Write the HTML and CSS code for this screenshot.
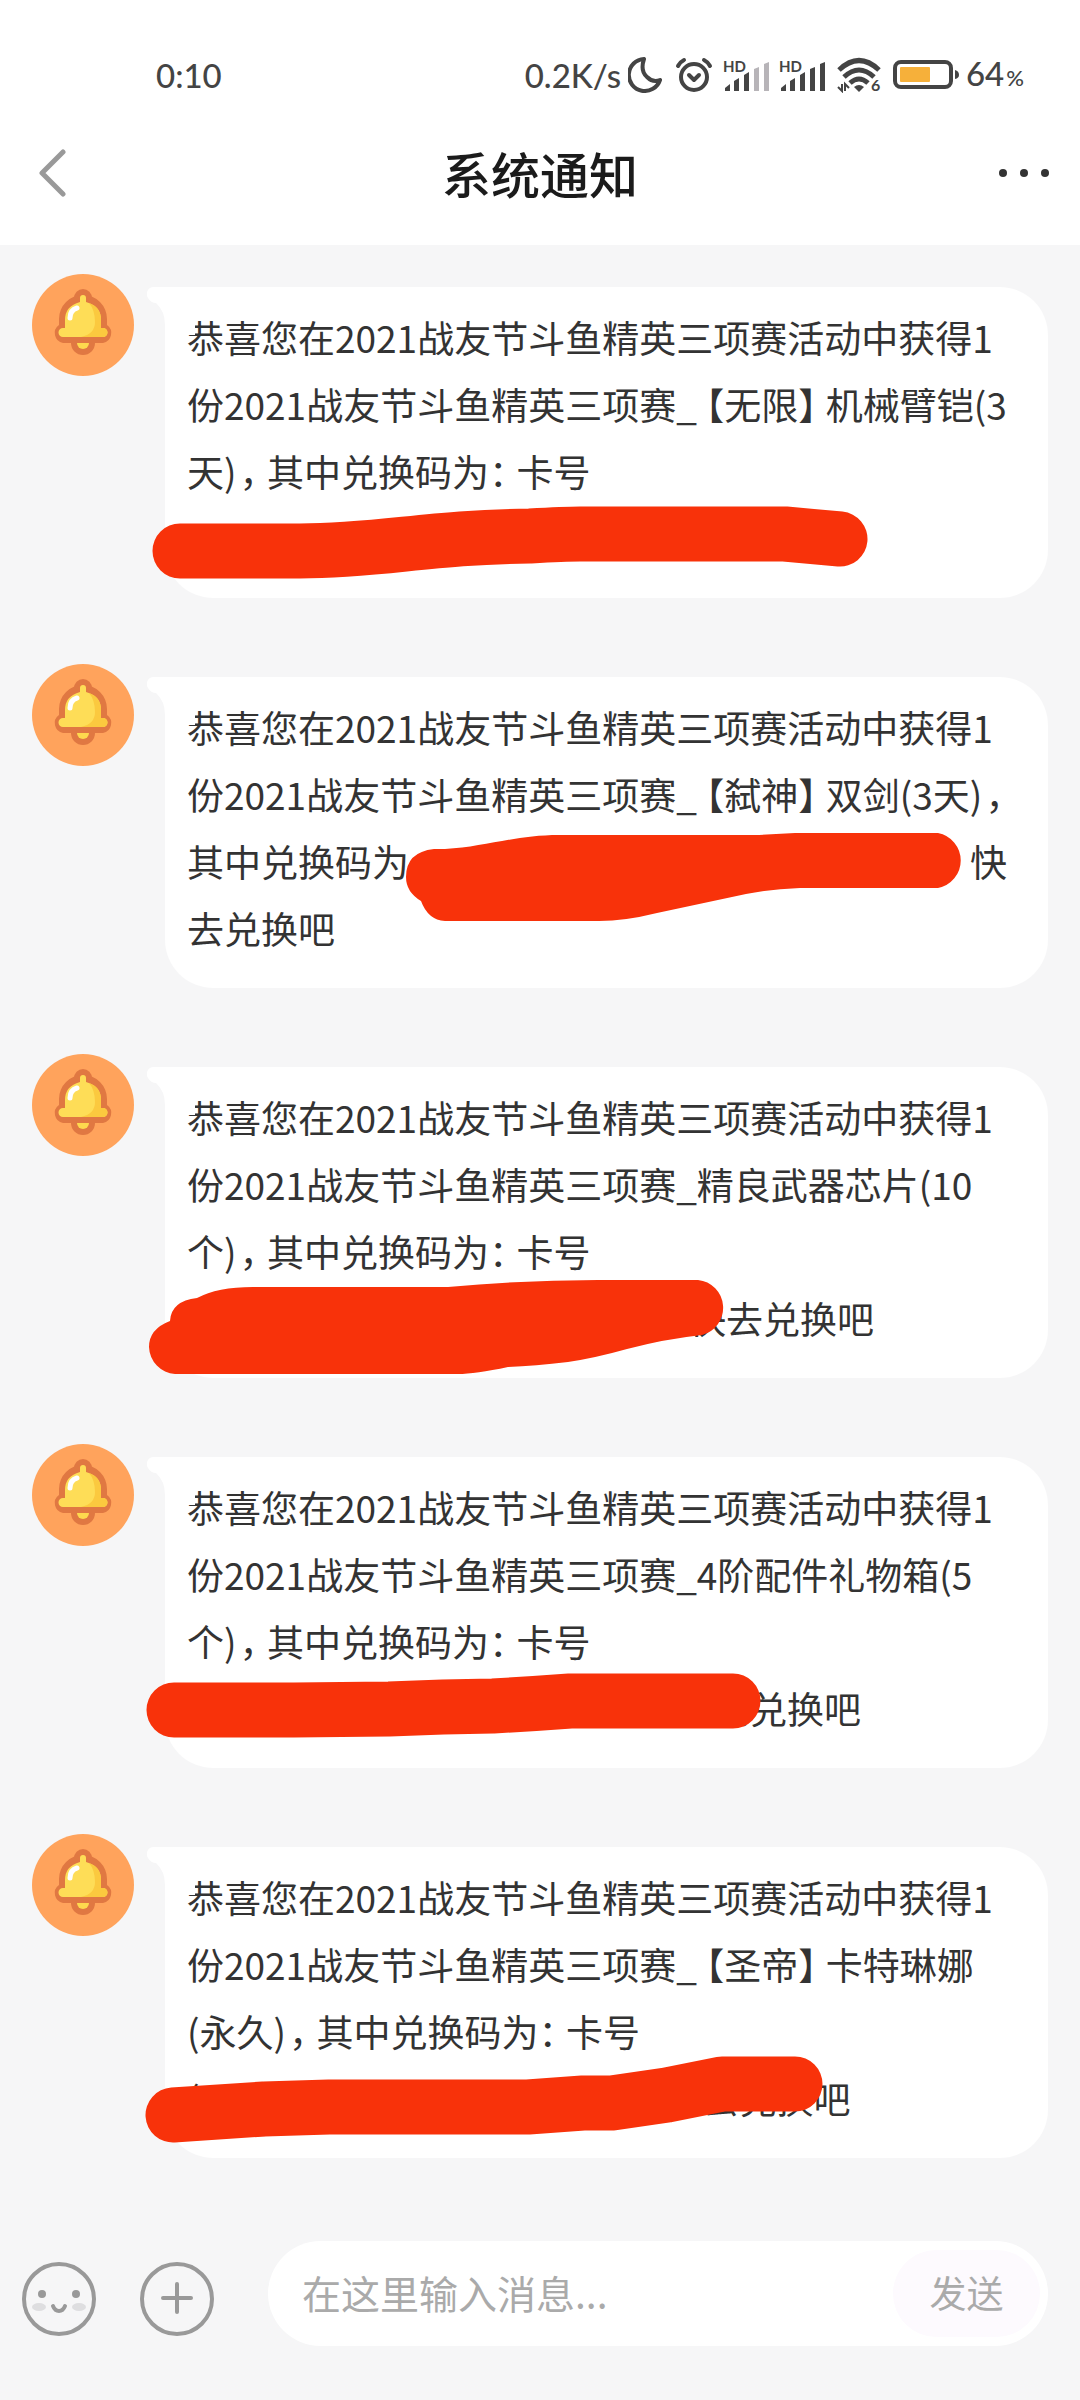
FILE: index.html
```html
<!DOCTYPE html>
<html lang="zh-CN">
<head>
<meta charset="utf-8">
<meta name="viewport" content="width=device-width, initial-scale=1">
<title>系统通知</title>
<link rel="stylesheet" href="styles.css">
</head>
<body>
<svg class="defs" width="0" height="0" aria-hidden="true">
  <symbol id="bell" viewBox="0 0 102 102">
    <circle cx="51" cy="51" r="51" fill="#ffa35c"/>
    <g fill="#e07842">
      <circle cx="51" cy="24" r="9"/>
      <path d="M27 51V45A24 24 0 0 1 75 45V51A10 10 0 0 1 71 69H31A10 10 0 0 1 27 51Z"/>
      <path d="M39 66H63V69A12 12 0 0 1 39 69Z"/>
    </g>
    <path d="M45 69H57A6 6 0 0 1 45 69Z" fill="#fed94e"/>
    <path d="M48 28V24A3 3 0 0 1 54 24V28Q69 32 69 46V54H71A4 4 0 0 1 71 63H31A4 4 0 0 1 31 54H33V46Q33 32 48 28Z" fill="#fedd57"/>
    <path d="M57 29Q69 33 69 46V54H71A4 4 0 0 1 71 63H49Q63 60 63 48Q63 36 57 29Z" fill="#fbc93f"/>
    <path d="M38 44Q38 36 45 34" fill="none" stroke="#fff" stroke-width="5" stroke-linecap="round"/>
  </symbol>
  <symbol id="bubble-tail" viewBox="0 0 48 48">
    <path d="M48 0H7A7 7 0 0 0 1 11Q4 16 9 16Q18 24 18 38V48H48Z" fill="#fff"/>
  </symbol>
</svg>

<header class="top">
  <div class="status">
    <time class="clock">0:10</time>
    <div class="indicators">
      <span>0.2K/s</span>
      <svg class="moon" width="34" height="36" viewBox="0 0 34 36" fill="none" stroke="#444" stroke-width="4" stroke-linejoin="round"><path d="M16 2A16 16 0 1 0 32 23Q25 26 19 20Q12 14 16 2Z"/></svg>
      <svg class="alarm" width="38" height="36" viewBox="0 0 38 36" fill="none" stroke="#444" stroke-width="4" stroke-linecap="round" stroke-linejoin="round"><circle cx="19" cy="20" r="13"/><path d="M14 18L19 23L24 18M3 9Q5 5 9 3M35 9Q33 5 29 3"/></svg>
      <svg class="signal" width="46" height="34" viewBox="0 -2 46 34" fill="#444"><text class="hd" x="0" y="12">HD</text><path d="M2 31V28L7 24V31ZM11 31V21L16 18V31ZM21 31V15L26 12V31Z"/><path fill="#b7b4b8" d="M31 31V9L36 7V31ZM41 31V4L46 2V31Z"/></svg>
      <svg class="signal" width="46" height="34" viewBox="0 -2 46 34" fill="#444"><text class="hd" x="0" y="12">HD</text><path d="M2 31V28L7 24V31ZM11 31V21L16 18V31ZM21 31V15L26 12V31ZM31 31V9L36 7V31ZM41 31V4L46 2V31Z"/></svg>
      <svg class="wifi" width="44" height="36" viewBox="0 0 44 36" fill="none" stroke="#444" stroke-width="5"><path d="M2 13Q22-6 42 13M7 20Q22 6 37 20M13 26Q22 18 31 26"/><path d="M22 35L17 30Q22 26 27 30Z" fill="#444" stroke="none"/><path stroke-width="2" d="M5 27V34L1 30M8 34V27L12 31"/><text class="six" x="34" y="34">6</text></svg>
      <svg class="battery" width="66" height="30" viewBox="0 0 66 30"><rect x="2" y="2" width="56" height="25" rx="6" fill="none" stroke="#444" stroke-width="4"/><rect x="7" y="7" width="30" height="15" rx="1" fill="#f6b03a"/><path d="M62 10Q66 11 66 15Q66 18 62 19Z" fill="#444"/></svg>
      <span class="level">64<small>%</small></span>
    </div>
  </div>
  <nav class="titlebar">
    <button class="nav-button back" type="button" aria-label="返回">
      <svg width="28" height="48" viewBox="0 0 28 48" fill="none" stroke="#999" stroke-width="5" stroke-linecap="round" stroke-linejoin="round"><path d="M25 3L4 24L25 45"/></svg>
    </button>
    <h1>系统通知</h1>
    <button class="nav-button" type="button" aria-label="更多">
      <svg width="52" height="10" viewBox="0 0 52 10" fill="#333"><circle cx="5" cy="5" r="4"/><circle cx="26" cy="5" r="4"/><circle cx="47" cy="5" r="4"/></svg>
    </button>
  </nav>
</header>

<main class="messages">
  <article class="message">
    <svg class="avatar"><use href="#bell"/></svg>
    <div class="bubble">
      <svg class="tail"><use href="#bubble-tail"/></svg>
      <p>恭喜您在2021战友节斗鱼精英三项赛活动中获得1<br>份2021战友节斗鱼精英三项赛_<span class="open">【</span>无限<span class="close">】</span>机械臂铠(3<br>天)<span class="comma">，</span>其中兑换码为<span class="close">：</span>卡号<br><span class="code" style="width:500px"></span></p>
      <svg class="marker" viewBox="0 0 883 311"><path d="M15 264H135C215 264 265 250 365 249Q400 247 415 247H620L675 252"/></svg>
    </div>
  </article>

  <article class="message">
    <svg class="avatar"><use href="#bell"/></svg>
    <div class="bubble">
      <svg class="tail"><use href="#bubble-tail"/></svg>
      <p>恭喜您在2021战友节斗鱼精英三项赛活动中获得1<br>份2021战友节斗鱼精英三项赛_<span class="open">【</span>弑神<span class="close">】</span>双剑(3天)<span class="comma">，</span><br>其中兑换码为<span class="code" style="width:561px"></span>快<br>去兑换吧</p>
      <svg class="marker" viewBox="0 0 883 311"><path class="area" d="M269 172H280C320 170 350 158 394 158H594L630 156H773A28 28 0 0 1 773 211H635Q605 212 581 217L492 236Q460 244 434 244H280Q263 243 256 224Q241 215 241 200Q241 175 269 172Z"/></svg>
    </div>
  </article>

  <article class="message">
    <svg class="avatar"><use href="#bell"/></svg>
    <div class="bubble">
      <svg class="tail"><use href="#bubble-tail"/></svg>
      <p>恭喜您在2021战友节斗鱼精英三项赛活动中获得1<br>份2021战友节斗鱼精英三项赛_精良武器芯片(10<br>个)<span class="comma">，</span>其中兑换码为<span class="close">：</span>卡号<br><span class="code" style="width:502px"></span>快去兑换吧</p>
      <svg class="marker" viewBox="0 0 883 311"><path class="area" d="M5 254Q6 234 32 231Q54 219 94 220H283Q360 213 433 213H533A28 28 0 0 1 537 268Q500 272 462 282Q430 291 403 295Q370 299 343 300Q310 307 293 307H10A28 28 0 0 1-16 280Q-16 262 5 254Z"/></svg>
    </div>
  </article>

  <article class="message">
    <svg class="avatar"><use href="#bell"/></svg>
    <div class="bubble">
      <svg class="tail"><use href="#bubble-tail"/></svg>
      <p>恭喜您在2021战友节斗鱼精英三项赛活动中获得1<br>份2021战友节斗鱼精英三项赛_4阶配件礼物箱(5<br>个)<span class="comma">，</span>其中兑换码为<span class="close">：</span>卡号<br><span class="code" style="width:526px"></span>去兑换吧</p>
      <svg class="marker" viewBox="0 0 883 311"><path d="M9 253H129L224 252L278 250L328 249Q365 247 405 244H568"/></svg>
    </div>
  </article>

  <article class="message">
    <svg class="avatar"><use href="#bell"/></svg>
    <div class="bubble">
      <svg class="tail"><use href="#bubble-tail"/></svg>
      <p>恭喜您在2021战友节斗鱼精英三项赛活动中获得1<br>份2021战友节斗鱼精英三项赛_<span class="open">【</span>圣帝<span class="close">】</span>卡特琳娜<br>(永久)<span class="comma">，</span>其中兑换码为<span class="close">：</span>卡号<br>(<span class="code" style="width:503px"></span>去兑换吧</p>
      <svg class="marker" viewBox="0 0 883 311"><path d="M8 268L99 262L164 260H363L418 256H447L502 248L557 237H630"/></svg>
    </div>
  </article>
</main>

<form class="composer">
  <button class="tool" type="button" aria-label="表情">
    <svg width="74" height="74" viewBox="0 0 74 74"><circle cx="37" cy="37" r="35" fill="none" stroke="#999" stroke-width="4"/><g fill="#dedee0"><ellipse cx="17" cy="45" rx="7" ry="4"/><ellipse cx="57" cy="45" rx="7" ry="4"/></g><g fill="#999"><circle cx="20" cy="32" r="4"/><circle cx="54" cy="32" r="4"/></g><path d="M31 44Q33 49 37 49Q41 49 43 44" fill="none" stroke="#999" stroke-width="4" stroke-linecap="round"/></svg>
  </button>
  <button class="tool" type="button" aria-label="添加">
    <svg width="74" height="74" viewBox="0 0 74 74" fill="none" stroke="#999" stroke-width="4"><circle cx="37" cy="37" r="35"/><path d="M37 22V50M23 36H51" stroke-linecap="round"/></svg>
  </button>
  <div class="field">
    <input type="text" aria-label="消息" placeholder="在这里输入消息...">
    <button class="send" type="submit">发送</button>
  </div>
</form>
</body>
</html>
```
FILE: styles.css
```css
* {
  box-sizing: border-box;
}

body {
  margin: 0;
  min-height: 100vh;
  display: flex;
  flex-direction: column;
  background: #f6f6f7;
  color: #333;
  font-family: "Noto Sans CJK SC", sans-serif;
}

svg {
  display: block;
  flex: none;
}

.defs {
  position: absolute;
}

button {
  border: 0;
  padding: 0;
  background: none;
  font: inherit;
}

.top {
  background: #fff;
}

.status {
  height: 104px;
  padding: 46px 56px 0 156px;
  display: flex;
  justify-content: space-between;
  color: #444;
  font: 500 33px/58px Lato, sans-serif;
}

.indicators {
  display: flex;
  align-items: center;
}

.indicators small {
  font-size: 22px;
  margin-left: 2px;
}

.moon {
  margin-left: 7px;
}

.alarm {
  margin-left: 13px;
}

.signal {
  margin-left: 10px;
}

.wifi {
  margin-left: 12px;
}

.battery {
  margin: 0 7px 0 12px;
}

.hd {
  font: 700 15px Lato, sans-serif;
}

.six {
  font: 700 16px Lato, sans-serif;
  fill: #444;
  stroke: none;
}

.titlebar {
  height: 141px;
  padding: 0 30px 3px;
  display: flex;
  align-items: center;
  justify-content: space-between;
}

.nav-button {
  width: 52px;
}

.back {
  padding-left: 8px;
}

h1 {
  margin: 0;
  color: #1b1b1b;
  font-size: 49px;
  font-weight: 500;
  line-height: 64px;
}

.messages {
  padding: 29px 32px 0;
  display: flex;
  flex-direction: column;
  gap: 66px;
}

.message {
  display: flex;
  align-items: flex-start;
  gap: 31px;
}

.avatar {
  width: 102px;
  height: 102px;
}

.bubble {
  position: relative;
  flex: 1;
  min-width: 0;
  margin-top: 13px;
  padding: 17px 22px 26px;
  border-radius: 0 48px 48px 48px;
  background: linear-gradient(#fff, #fff) no-repeat 30px 0, linear-gradient(#fff, #fff) no-repeat 0 48px;
}

.bubble p {
  margin: 0;
  font-size: 37px;
  line-height: 67px;
}

.tail {
  position: absolute;
  left: -18px;
  top: 0;
  width: 48px;
  height: 48px;
}

.marker {
  position: absolute;
  left: 0;
  top: 0;
  width: 883px;
  height: 311px;
  overflow: visible;
  fill: none;
  stroke: #f8320a;
  stroke-width: 55px;
  stroke-linecap: round;
  stroke-linejoin: round;
}

.marker .area {
  fill: #f8320a;
  stroke: none;
}

.code {
  display: inline-block;
}

/* Half-width punctuation with a little air on its blank side. */
.open,
.close,
.comma {
  font-feature-settings: "halt";
}

.open {
  margin-left: 9px;
}

.close {
  margin-right: 9px;
}

.comma {
  margin: 0 9px 0 3px;
}

.composer {
  margin-top: auto;
  padding: 0 32px 54px 22px;
  display: flex;
  align-items: center;
}

.tool {
  margin: 10px 44px 0 0;
}

.field {
  flex: 1;
  min-width: 0;
  height: 105px;
  margin-left: 10px;
  padding: 9px 8px 9px 34px;
  border-radius: 53px;
  background: #fff;
  display: flex;
}

.field input {
  flex: 1;
  min-width: 0;
  border: 0;
  padding: 0 0 4px;
  outline: 0;
  background: none;
  font: inherit;
  font-size: 39px;
}

.field input::placeholder {
  color: #aaa;
  opacity: 1;
}

.send {
  width: 147px;
  padding-bottom: 3px;
  border-radius: 44px;
  background: #fdfafe;
  color: #aaa;
  font-size: 37px;
}
```
